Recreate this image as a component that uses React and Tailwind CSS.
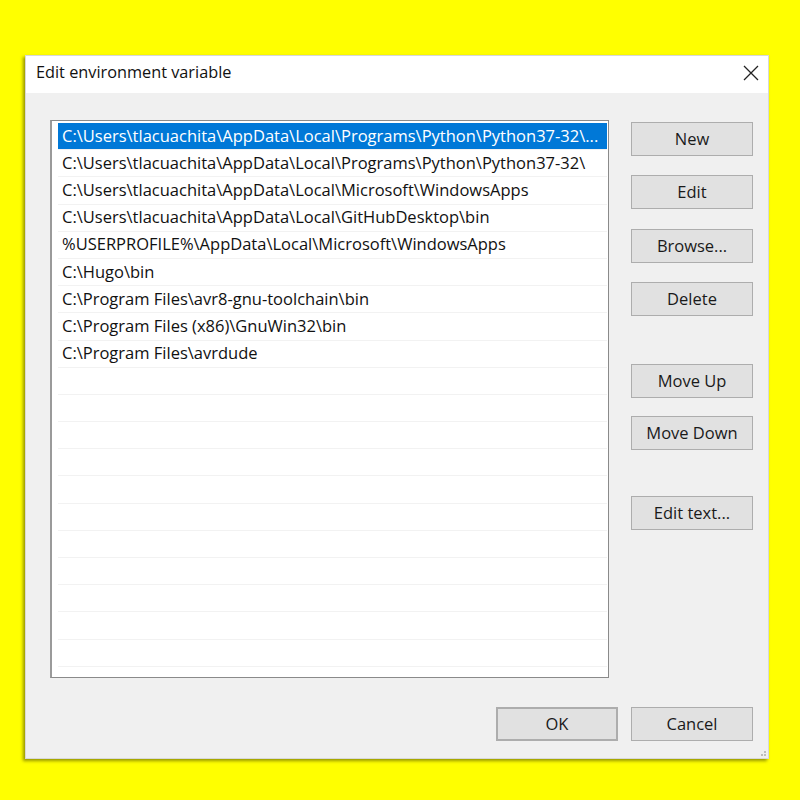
import React from "react";

const rows = [
  "C:\\Users\\tlacuachita\\AppData\\Local\\Programs\\Python\\Python37-32\\...",
  "C:\\Users\\tlacuachita\\AppData\\Local\\Programs\\Python\\Python37-32\\",
  "C:\\Users\\tlacuachita\\AppData\\Local\\Microsoft\\WindowsApps",
  "C:\\Users\\tlacuachita\\AppData\\Local\\GitHubDesktop\\bin",
  "%USERPROFILE%\\AppData\\Local\\Microsoft\\WindowsApps",
  "C:\\Hugo\\bin",
  "C:\\Program Files\\avr8-gnu-toolchain\\bin",
  "C:\\Program Files (x86)\\GnuWin32\\bin",
  "C:\\Program Files\\avrdude",
];

const allRows = [...rows, ...Array(11).fill("")];

function Btn({ children, className = "" }) {
  return (
    <div
      className={
        "w-[122px] h-[34px] flex items-center justify-center bg-[#e1e1e1] border border-[#adadad] text-[16.5px] text-[#1a1a1a] " +
        className
      }
    >
      {children}
    </div>
  );
}

export default function App() {
  return (
    <div
      className="w-[800px] h-[800px] bg-[#ffff00] pt-[55px] pl-[25px]"
      style={{ fontFamily: '"Open Sans", "Noto Sans", sans-serif' }}
    >
      <div className="relative w-[744px] h-[704px] bg-[#f0f0f0] flex flex-col shadow-[-2px_2px_3px_rgba(80,80,0,0.6)] border border-[#d8d8d8]">
        <div className="h-[37px] bg-white flex items-center justify-between pl-[10px] pr-[9px] pb-[4px]">
          <span className="text-[16.3px] text-[#111]">Edit environment variable</span>
          <svg width="16" height="16" viewBox="0 0 16 16">
            <path d="M1 1 L15 15 M15 1 L1 15" stroke="#222" strokeWidth="1.3" />
          </svg>
        </div>
        <div className="flex-1 flex flex-col pl-[24px] pr-[15px] pt-[27px]">
          <div className="flex gap-[22px]">
            <div className="w-[560px] h-[558px] bg-white border border-[#8a8a8a] border-l-2 border-l-[#9a9a9a] pt-[2px] pl-[6px] pr-[1px] overflow-hidden">
              {allRows.map((r, i) => (
                <div
                  key={i}
                  className={
                    "h-[27.2px] flex items-center pl-[4px] text-[16.5px] whitespace-nowrap border-b border-[#f2f2f2] " +
                    (i === 0 ? "bg-[#0078d7] text-white" : "text-[#111]")
                  }
                >
                  {r}
                </div>
              ))}
            </div>
            <div className="flex flex-col pt-[2px]">
              <Btn>New</Btn>
              <Btn className="mt-[19px]">Edit</Btn>
              <Btn className="mt-[20px]">Browse...</Btn>
              <Btn className="mt-[19px]">Delete</Btn>
              <Btn className="mt-[48px]">Move Up</Btn>
              <Btn className="mt-[18px]">Move Down</Btn>
              <Btn className="mt-[46px]">Edit text...</Btn>
            </div>
          </div>
          <div className="flex justify-end gap-[13px] mt-[29px]">
            <Btn className="border-2 border-[#0078d7]">OK</Btn>
            <Btn>Cancel</Btn>
          </div>
        </div>
        <svg className="absolute right-[1px] bottom-[1px]" width="10" height="10" viewBox="0 0 10 10">
          <rect x="7" y="7" width="2" height="2" fill="#bdbdbd" />
          <rect x="4" y="7" width="2" height="2" fill="#bdbdbd" />
          <rect x="7" y="4" width="2" height="2" fill="#bdbdbd" />
        </svg>
      </div>
    </div>
  );
}
